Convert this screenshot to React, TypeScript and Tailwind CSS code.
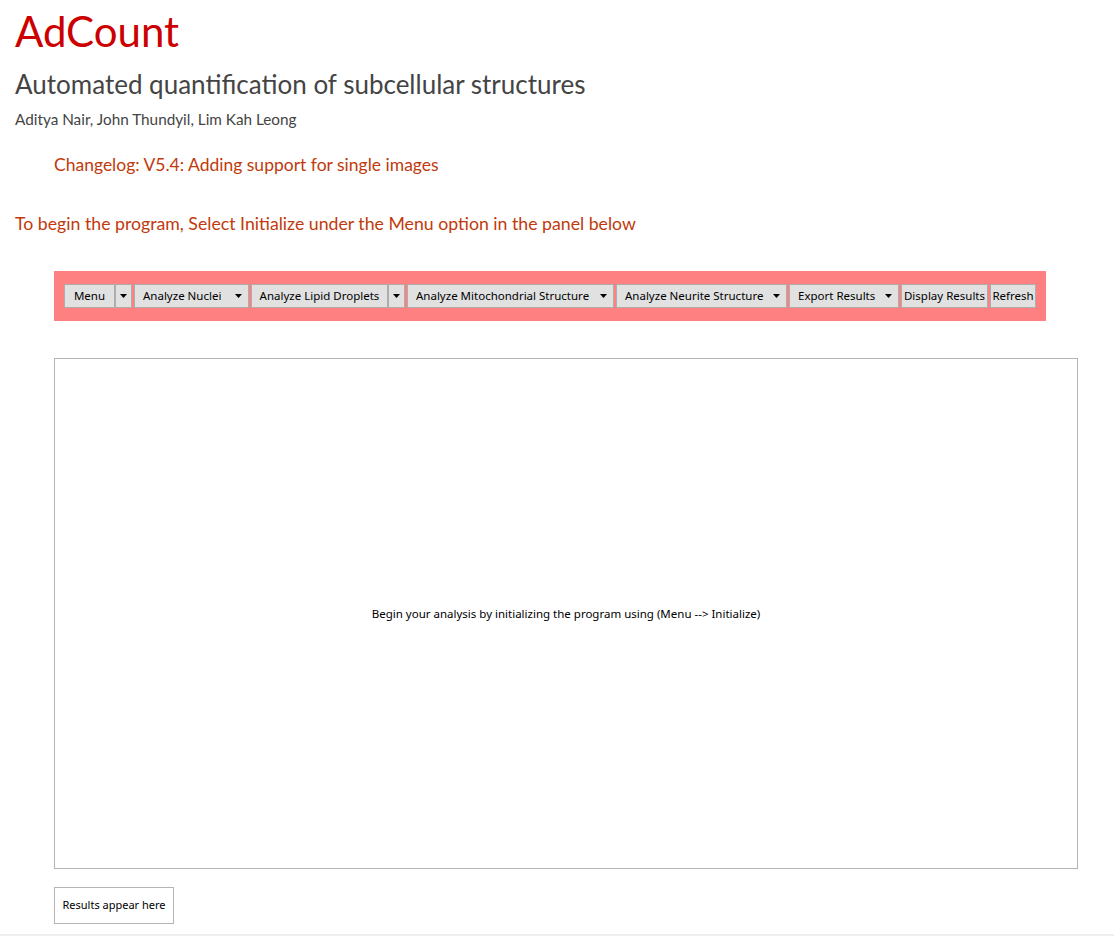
import React from "react";

const Arrow = () => (
  <svg width="7" height="4" viewBox="0 0 7 4" className="shrink-0">
    <path d="M0 0 L7 0 L3.5 4 Z" fill="#000" />
  </svg>
);

const base = "flex h-[24px] shrink-0 items-center border border-[#adadad] bg-[#e1e1e1] whitespace-nowrap overflow-hidden";

function SplitBtn({ label, w }: { label: string; w: string }) {
  return (
    <div className="flex h-[24px] shrink-0">
      <div className={`${base} justify-center ${w}`}>{label}</div>
      <div className={`${base} w-[17px] justify-center`}>
        <Arrow />
      </div>
    </div>
  );
}

function DropBtn({ label, w }: { label: string; w: string }) {
  return (
    <div className={`${base} justify-between pl-[8px] pr-[6px] ${w}`}>
      <span>{label}</span>
      <Arrow />
    </div>
  );
}

function Btn({ label, w }: { label: string; w: string }) {
  return <div className={`${base} justify-center ${w}`}>{label}</div>;
}

export default function App() {
  const title = { fontFamily: '"Lato", "Open Sans", sans-serif' };
  const ui = { fontFamily: '"Noto Sans", "Open Sans", sans-serif' };
  return (
    <div className="min-h-[936px] w-[1114px] bg-white">
      <div className="flex flex-col pl-[15px] pt-[6px]" style={title}>
        <h1 className="text-[42px] leading-[50px] text-[#cc0000]">AdCount</h1>
        <h2 className="mt-[12px] text-[26px] leading-[32px] text-[#444444]">Automated quantification of subcellular structures</h2>
        <p className="mt-[9px] text-[15.3px] leading-[20px] text-[#444444]">Aditya Nair, John Thundyil, Lim Kah Leong</p>
        <p className="ml-[39px] mt-[24px] text-[17.5px] leading-[24px] text-[#bf3a0c]">Changelog: V5.4: Adding support for single images</p>
        <p className="mt-[35px] text-[17.7px] leading-[24px] text-[#bf3a0c]">To begin the program, Select Initialize under the Menu option in the panel below</p>
      </div>
      <div className="ml-[54px] mt-[35px] flex h-[50px] w-[992px] items-center gap-[2px] bg-[#ff8080] pl-[10px] text-[11.5px] text-black" style={ui}>
        <SplitBtn label="Menu" w="w-[51px]" />
        <DropBtn label="Analyze Nuclei" w="w-[115px]" />
        <SplitBtn label="Analyze Lipid Droplets" w="w-[137px]" />
        <DropBtn label="Analyze Mitochondrial Structure" w="w-[207px]" />
        <DropBtn label="Analyze Neurite Structure" w="w-[171px]" />
        <DropBtn label="Export Results" w="w-[110px]" />
        <Btn label="Display Results" w="w-[87px]" />
        <Btn label="Refresh" w="w-[46px]" />
      </div>
      <div className="ml-[54px] mt-[37px] flex h-[511px] w-[1024px] items-center justify-center border border-[#b4b4b4] text-[11.5px] text-black" style={ui}>
        Begin your analysis by initializing the program using (Menu --&gt; Initialize)
      </div>
      <div className="ml-[54px] mt-[18px] flex h-[37px] w-[120px] items-center justify-center border border-[#b4b4b4] text-[11px] text-black" style={ui}>
        Results appear here
      </div>
      <div className="mt-[10px] h-[2px] w-full bg-[#eeeeee]" />
    </div>
  );
}
